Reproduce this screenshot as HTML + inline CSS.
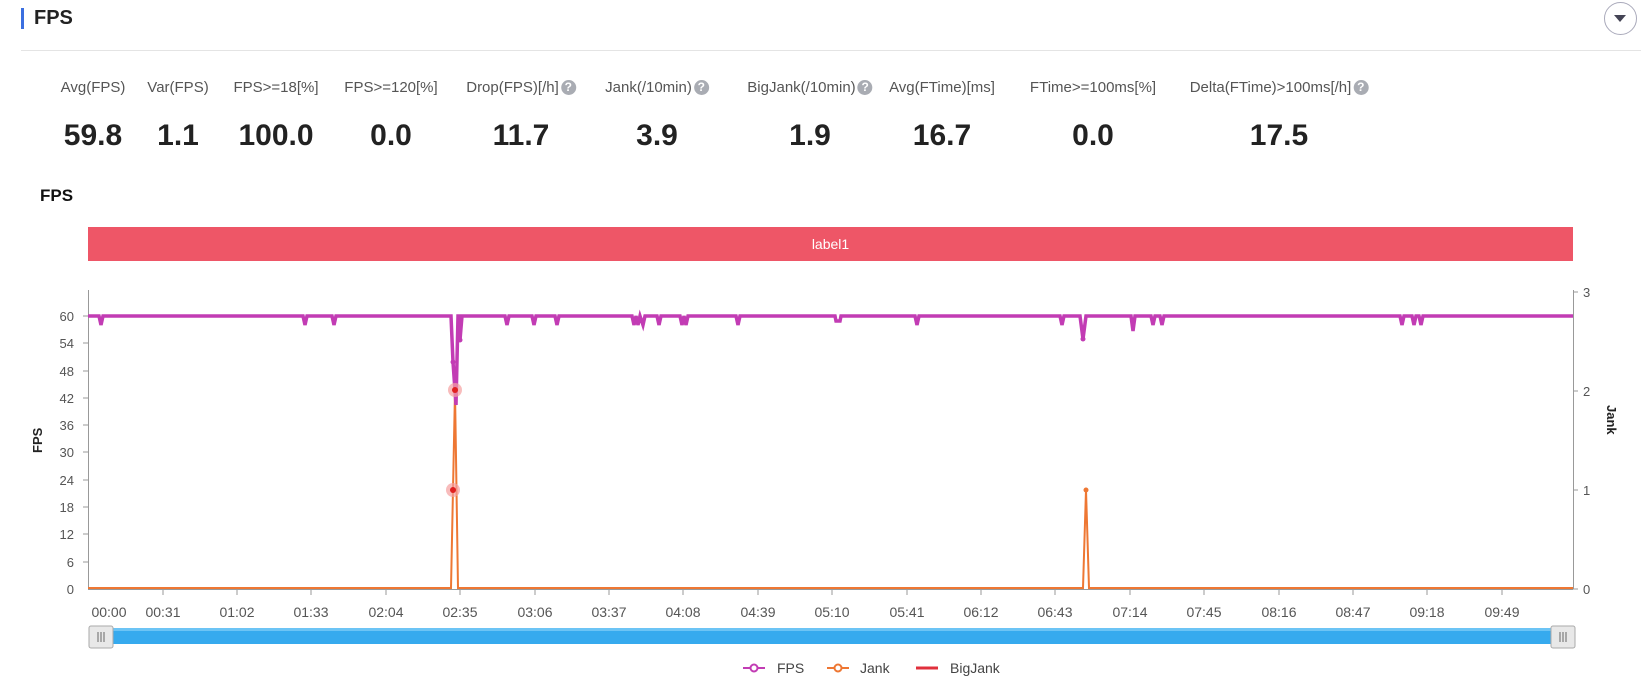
<!DOCTYPE html>
<html><head><meta charset="utf-8"><style>
body{margin:0;width:1648px;height:688px;background:#fff;font-family:"Liberation Sans",sans-serif;position:relative;overflow:hidden;color:#333}
.a{position:absolute;white-space:nowrap}
.lb{font-size:15px;color:#555;transform:translateX(-50%);top:79px}
.v{font-size:30px;font-weight:bold;color:#222;transform:translateX(-50%);top:119px}
.q{display:inline-block;width:15px;height:15px;border-radius:50%;background:#a9acb3;color:#fff;font-size:12px;font-weight:bold;text-align:center;line-height:15px;vertical-align:1px;margin-left:2px}
</style></head><body>
<div class="a" style="left:21px;top:8px;width:3px;height:21px;background:#3b6fe0"></div>
<div class="a" style="left:34px;top:7px;font-size:20px;font-weight:bold;color:#222">FPS</div>
<div class="a" style="left:1604px;top:2px;width:33px;height:33px;border:1px solid #aab;border-radius:50%;box-sizing:border-box"></div>
<div class="a" style="left:1614px;top:15px;width:0;height:0;border-left:6px solid transparent;border-right:6px solid transparent;border-top:7px solid #445"></div>
<div class="a" style="left:21px;top:50px;width:1620px;height:1px;background:#e4e4e4"></div>

<div class="a lb" style="left:93px">Avg(FPS)</div>
<div class="a lb" style="left:178px">Var(FPS)</div>
<div class="a lb" style="left:276px">FPS&gt;=18[%]</div>
<div class="a lb" style="left:391px">FPS&gt;=120[%]</div>
<div class="a lb" style="left:521px">Drop(FPS)[/h]<span class="q">?</span></div>
<div class="a lb" style="left:657px">Jank(/10min)<span class="q">?</span></div>
<div class="a lb" style="left:810px">BigJank(/10min)<span class="q">?</span></div>
<div class="a lb" style="left:942px">Avg(FTime)[ms]</div>
<div class="a lb" style="left:1093px">FTime&gt;=100ms[%]</div>
<div class="a lb" style="left:1279px">Delta(FTime)&gt;100ms[/h]<span class="q">?</span></div>

<div class="a v" style="left:93px">59.8</div>
<div class="a v" style="left:178px">1.1</div>
<div class="a v" style="left:276px">100.0</div>
<div class="a v" style="left:391px">0.0</div>
<div class="a v" style="left:521px">11.7</div>
<div class="a v" style="left:657px">3.9</div>
<div class="a v" style="left:810px">1.9</div>
<div class="a v" style="left:942px">16.7</div>
<div class="a v" style="left:1093px">0.0</div>
<div class="a v" style="left:1279px">17.5</div>

<div class="a" style="left:40px;top:186px;font-size:17px;font-weight:bold;color:#111">FPS</div>
<div class="a" style="left:88px;top:227px;width:1485px;height:34px;background:#ee5667;color:#fff;font-size:14px;text-align:center;line-height:34px">label1</div>

<svg class="a" style="left:0;top:0" width="1648" height="688" font-family="Liberation Sans, sans-serif" font-size="13" fill="#555">
<line x1="88.5" y1="290" x2="88.5" y2="589" stroke="#999"/>
<line x1="1573.5" y1="290" x2="1573.5" y2="589" stroke="#999"/>
<line x1="88" y1="589.5" x2="1573" y2="589.5" stroke="#999"/>
<g stroke="#999">
<line x1="83" y1="316" x2="88" y2="316"/><line x1="83" y1="343" x2="88" y2="343"/><line x1="83" y1="371" x2="88" y2="371"/><line x1="83" y1="398" x2="88" y2="398"/><line x1="83" y1="425" x2="88" y2="425"/><line x1="83" y1="452" x2="88" y2="452"/><line x1="83" y1="480" x2="88" y2="480"/><line x1="83" y1="507" x2="88" y2="507"/><line x1="83" y1="534" x2="88" y2="534"/><line x1="83" y1="562" x2="88" y2="562"/>
<line x1="1573" y1="292" x2="1578" y2="292"/><line x1="1573" y1="391" x2="1578" y2="391"/><line x1="1573" y1="490" x2="1578" y2="490"/><line x1="1573" y1="589" x2="1578" y2="589"/>
</g>
<g text-anchor="end">
<text x="74" y="321">60</text><text x="74" y="348">54</text><text x="74" y="376">48</text><text x="74" y="403">42</text><text x="74" y="430">36</text><text x="74" y="457">30</text><text x="74" y="485">24</text><text x="74" y="512">18</text><text x="74" y="539">12</text><text x="74" y="567">6</text><text x="74" y="594">0</text>
</g>
<text x="1583" y="297">3</text><text x="1583" y="396">2</text><text x="1583" y="495">1</text><text x="1583" y="594">0</text>
<text transform="translate(42,453) rotate(-90)" font-weight="bold" fill="#222" font-size="13">FPS</text>
<text transform="translate(1607,405) rotate(90)" font-weight="bold" fill="#222" font-size="13">Jank</text>
<g id="xt" stroke="#999">
</g>
<g font-size="14" text-anchor="middle">
<text x="109" y="617">00:00</text><text x="163" y="617">00:31</text><text x="237" y="617">01:02</text><text x="311" y="617">01:33</text><text x="386" y="617">02:04</text><text x="460" y="617">02:35</text><text x="535" y="617">03:06</text><text x="609" y="617">03:37</text><text x="683" y="617">04:08</text><text x="758" y="617">04:39</text><text x="832" y="617">05:10</text><text x="907" y="617">05:41</text><text x="981" y="617">06:12</text><text x="1055" y="617">06:43</text><text x="1130" y="617">07:14</text><text x="1204" y="617">07:45</text><text x="1279" y="617">08:16</text><text x="1353" y="617">08:47</text><text x="1427" y="617">09:18</text><text x="1502" y="617">09:49</text>
</g>
<g stroke="#999">
<line x1="163" y1="589" x2="163" y2="595"/><line x1="237" y1="589" x2="237" y2="595"/><line x1="311" y1="589" x2="311" y2="595"/><line x1="386" y1="589" x2="386" y2="595"/><line x1="460" y1="589" x2="460" y2="595"/><line x1="535" y1="589" x2="535" y2="595"/><line x1="609" y1="589" x2="609" y2="595"/><line x1="683" y1="589" x2="683" y2="595"/><line x1="758" y1="589" x2="758" y2="595"/><line x1="832" y1="589" x2="832" y2="595"/><line x1="907" y1="589" x2="907" y2="595"/><line x1="981" y1="589" x2="981" y2="595"/><line x1="1055" y1="589" x2="1055" y2="595"/><line x1="1130" y1="589" x2="1130" y2="595"/><line x1="1204" y1="589" x2="1204" y2="595"/><line x1="1279" y1="589" x2="1279" y2="595"/><line x1="1353" y1="589" x2="1353" y2="595"/><line x1="1427" y1="589" x2="1427" y2="595"/><line x1="1502" y1="589" x2="1502" y2="595"/>
</g>
<!-- jank -->
<polyline fill="none" stroke="#ee7733" stroke-width="2" points="88,588 451,588 455,391 458,588 1083,588 1086,490 1089,588 1573,588"/>
<circle cx="1086" cy="490" r="2.5" fill="#ee7733"/>
<!-- fps -->
<polyline fill="none" stroke="#c23cb4" stroke-width="3.5" points="88,316 99,316 101,325 103,316 303,316 305,325 307,316 332,316 334,325 336,316 451,316 453,362 456,405 458,316 459,316 460,340 462,316 505,316 507,325 509,316 532,316 534,325 536,316 555,316 557,325 559,316 632,316 634,325 636,316 638,325 640,316 643,325 645,316 657,316 659,325 661,316 680,316 682,325 684,316 686,325 688,316 736,316 738,325 740,316 835,316 836,321 840,321 841,316 915,316 917,325 919,316 1060,316 1062,325 1064,316 1080,316 1083,339 1086,316 1131,316 1133,331 1135,316 1151,316 1153,325 1155,316 1160,316 1162,325 1164,316 1400,316 1402,325 1404,316 1412,316 1414,325 1416,316 1419,316 1421,325 1423,316 1573,316"/>
<circle cx="453" cy="362" r="2.5" fill="#c23cb4"/><circle cx="460" cy="340" r="2.5" fill="#c23cb4"/><circle cx="1083" cy="339" r="2.5" fill="#c23cb4"/>
<circle cx="455" cy="390" r="7" fill="#f5a0a0" opacity=".7"/><circle cx="455" cy="390" r="3" fill="#e02020"/>
<circle cx="453" cy="490" r="7" fill="#f5a0a0" opacity=".7"/><circle cx="453" cy="490" r="3" fill="#e02020"/>
<!-- slider -->
<rect x="94" y="628" width="1473" height="16" fill="#36aaee"/>
<rect x="94" y="628" width="1473" height="3" fill="#6cc4f5"/>
<rect x="89" y="626" width="24" height="22" rx="2" fill="#e8e8e8" stroke="#aaa"/>
<rect x="1551" y="626" width="24" height="22" rx="2" fill="#e8e8e8" stroke="#aaa"/>
<g stroke="#666"><line x1="98" y1="632" x2="98" y2="642"/><line x1="101" y1="632" x2="101" y2="642"/><line x1="104" y1="632" x2="104" y2="642"/><line x1="1560" y1="632" x2="1560" y2="642"/><line x1="1563" y1="632" x2="1563" y2="642"/><line x1="1566" y1="632" x2="1566" y2="642"/></g>
<!-- legend -->
<line x1="743" y1="668" x2="765" y2="668" stroke="#c23cb4" stroke-width="2"/><circle cx="754" cy="668" r="3.5" fill="#fff" stroke="#c23cb4" stroke-width="2"/>
<text x="777" y="673" font-size="14" fill="#444">FPS</text>
<line x1="827" y1="668" x2="849" y2="668" stroke="#ee7733" stroke-width="2"/><circle cx="838" cy="668" r="3.5" fill="#fff" stroke="#ee7733" stroke-width="2"/>
<text x="860" y="673" font-size="14" fill="#444">Jank</text>
<line x1="916" y1="668" x2="938" y2="668" stroke="#e0303c" stroke-width="3"/>
<text x="950" y="673" font-size="14" fill="#444">BigJank</text>
</svg>
</body></html>
